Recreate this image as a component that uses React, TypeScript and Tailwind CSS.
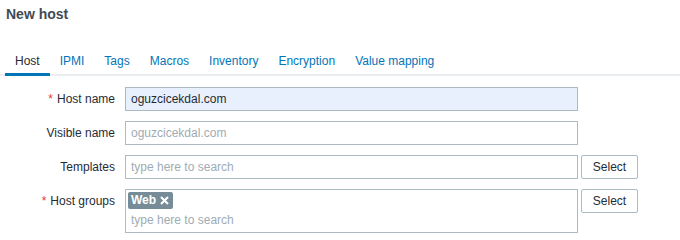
const tabs = ["Host", "IPMI", "Tags", "Macros", "Inventory", "Encryption", "Value mapping"];

function Label({ text, required }: { text: string; required?: boolean }) {
  return (
    <div className="w-[115px] shrink-0 text-right leading-[24px]">
      {required && <span className="mr-[4px] text-[#e33734]">*</span>}
      {text}
    </div>
  );
}

function SelectButton() {
  return (
    <button className="ml-[3px] h-[24px] w-[57px] shrink-0 rounded-[2px] border border-[#acbbc2] bg-white text-[12px] text-[#1f2c33]">
      Select
    </button>
  );
}

export default function App() {
  return (
    <div className="h-[240px] w-[680px] bg-white font-['Liberation_Sans',Arial,sans-serif] text-[12px] text-[#1f2c33]">
      <h1 className="pl-[6px] pt-[6px] text-[14px] font-bold leading-[16px] text-[#3f4b54]">New host</h1>

      <div className="mt-[24px] flex border-b-2 border-[#ebeef0] pl-[5px]">
        {tabs.map((t, i) => (
          <div
            key={t}
            className={`-mb-[2px] border-b-[3px] px-[10px] pb-[5px] pt-[8px] leading-[14px] ${
              i === 0 ? "border-[#0275b8] text-[#1f2c33]" : "border-transparent text-[#0275b8]"
            }`}
          >
            {t}
          </div>
        ))}
      </div>

      <div className="mt-[11px] flex flex-col gap-[10px]">
        <div className="flex gap-[10px]">
          <Label text="Host name" required />
          <div className="flex h-[24px] w-[453px] items-center border border-[#acbbc2] bg-[#e8f0fe] px-[5px]">
            oguzcicekdal.com
          </div>
        </div>

        <div className="flex gap-[10px]">
          <Label text="Visible name" />
          <div className="flex h-[24px] w-[453px] items-center border border-[#acbbc2] bg-white px-[5px] text-[#a0acb3]">
            oguzcicekdal.com
          </div>
        </div>

        <div className="flex gap-[10px]">
          <Label text="Templates" />
          <div className="flex">
            <div className="flex h-[24px] w-[453px] items-center border border-[#acbbc2] bg-white px-[5px] text-[#a0acb3]">
              type here to search
            </div>
            <SelectButton />
          </div>
        </div>

        <div className="flex gap-[10px]">
          <Label text="Host groups" required />
          <div className="flex items-start">
            <div className="flex h-[44px] w-[453px] flex-col border border-[#acbbc2] bg-white p-[2px]">
              <div className="flex">
                <span className="flex h-[17px] items-center gap-[4px] rounded-[2px] bg-[#768d99] pl-[3px] pr-[4px] font-bold leading-[17px] text-white">
                  Web
                  <svg width="9" height="9" viewBox="0 0 9 9">
                    <path d="M1 1L8 8M8 1L1 8" stroke="white" strokeWidth="2.1" />
                  </svg>
                </span>
              </div>
              <div className="flex h-[22px] items-center px-[3px] pt-[1px] text-[#a0acb3]">type here to search</div>
            </div>
            <SelectButton />
          </div>
        </div>
      </div>
    </div>
  );
}
